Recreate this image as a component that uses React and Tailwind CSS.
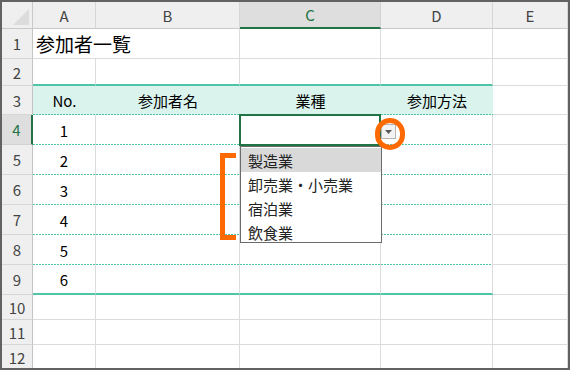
import React from "react";

const COLS = ["A", "B", "C", "D", "E"];
const ROWS = [1, 2, 3, 4, 5, 6, 7, 8, 9, 10, 11, 12];
const DOTS =
  "bg-[repeating-linear-gradient(90deg,#4fc5a7_0px,#4fc5a7_2px,transparent_2px,transparent_3px)] bg-[length:100%_1px] bg-bottom bg-no-repeat";

const content = {
  "3-0": "No.",
  "3-1": "参加者名",
  "3-2": "業種",
  "3-3": "参加方法",
  "4-0": "1",
  "5-0": "2",
  "6-0": "3",
  "7-0": "4",
  "8-0": "5",
  "9-0": "6",
};

const OPTIONS = ["製造業", "卸売業・小売業", "宿泊業", "飲食業"];

function cellClass(r, c) {
  const inTable = c <= 3;
  if (r === 1 && c === 0) return "justify-start border-b border-[#dcdcdc]";
  if (r === 2 && inTable) return "justify-center border-r border-r-[#dcdcdc] border-b-2 border-b-[#4fc5a7]";
  if (r === 3 && inTable) return `justify-center bg-[#daf3ed] ${DOTS}`;
  if (r >= 4 && r <= 8 && inTable) return `justify-center border-r border-r-[#dcdcdc] ${DOTS}`;
  if (r === 9 && inTable) return "justify-center border-r border-r-[#dcdcdc] border-b-2 border-b-[#4fc5a7]";
  return "justify-center border-r border-b border-[#dcdcdc]";
}

function ActiveCell() {
  return (
    <div className={`relative border-r border-r-[#dcdcdc] ${DOTS}`}>
      <div className="absolute -top-px -left-px -right-px -bottom-px border-2 border-[#217346] z-10" />
      <div className="absolute left-[141px] top-[9px] w-[15px] h-[15px] border border-[#b4b4b4] bg-[#f3f3f3] flex items-center justify-center z-20">
        <svg width="7" height="4" viewBox="0 0 7 4">
          <path d="M0 0 L7 0 L3.5 4 Z" fill="#5a5a5a" />
        </svg>
      </div>
      <div className="absolute left-[135px] top-[3px] w-[30px] h-[32px] rounded-full border-[5px] border-[#ff6a00] z-30" />
      <div className="absolute left-0 top-[31px] w-[142px] h-[97px] bg-white border border-[#6b6b6b] z-20 pt-px">
        {OPTIONS.map((o, i) => (
          <div
            key={o}
            className={`h-[24px] flex items-center pl-[7px] text-[15px] leading-none text-[#222] ${i === 0 ? "bg-[#d9d9d9]" : ""}`}
          >
            {o}
          </div>
        ))}
      </div>
      <div className="absolute -left-[20px] top-[38px] w-[16px] h-[87px] border-l-[5px] border-y-[5px] border-[#ff6a00] z-20" />
    </div>
  );
}

export default function App() {
  return (
    <div
      className="w-[570px] h-[370px] border-2 border-[#626262] bg-white overflow-hidden"
      style={{ fontFamily: '"Noto Sans CJK JP", "Noto Sans", sans-serif' }}
    >
      <div className="grid grid-cols-[31px_63px_144px_141px_112px_1fr] grid-rows-[27px_30px_27px_29px_repeat(6,30px)_repeat(3,25px)]">
        <div className="bg-[#efefef] border-r border-b border-[#c9c9c9] flex items-end justify-end pr-[3px] pb-[3px]">
          <svg width="16" height="16" viewBox="0 0 16 16">
            <path d="M16 0 L16 16 L0 16 Z" fill="#dcdcdc" />
          </svg>
        </div>
        {COLS.map((c) =>
          c === "C" ? (
            <div
              key={c}
              className="bg-[#dedede] border-r border-r-[#d2d2d2] border-b-2 border-b-[#217346] flex items-center justify-center text-[15px] text-[#217346] leading-none"
            >
              {c}
            </div>
          ) : (
            <div
              key={c}
              className="bg-[#efefef] border-r border-r-[#d6d6d6] border-b border-b-[#c9c9c9] flex items-center justify-center text-[15px] text-[#444] leading-none"
            >
              {c}
            </div>
          )
        )}
        {ROWS.map((r) => (
          <React.Fragment key={r}>
            {r === 4 ? (
              <div className="bg-[#dedede] border-r-2 border-r-[#217346] border-b border-b-[#d2d2d2] flex items-center justify-center text-[15px] text-[#217346] leading-none">
                {r}
              </div>
            ) : (
              <div className="bg-[#efefef] border-r border-r-[#c4c4c4] border-b border-b-[#d6d6d6] flex items-center justify-center text-[15px] text-[#444] leading-none">
                {r}
              </div>
            )}
            {COLS.map((c, ci) => {
              if (r === 4 && ci === 2) return <ActiveCell key={c} />;
              const t = content[`${r}-${ci}`];
              return (
                <div key={c} className={`flex items-center ${cellClass(r, ci)}`}>
                  {r === 1 && ci === 0 ? (
                    <span className="pl-[3px] whitespace-nowrap text-[19px] leading-none text-black">
                      参加者一覧
                    </span>
                  ) : t ? (
                    <span className="text-[15px] leading-none text-black">{t}</span>
                  ) : null}
                </div>
              );
            })}
          </React.Fragment>
        ))}
      </div>
    </div>
  );
}
